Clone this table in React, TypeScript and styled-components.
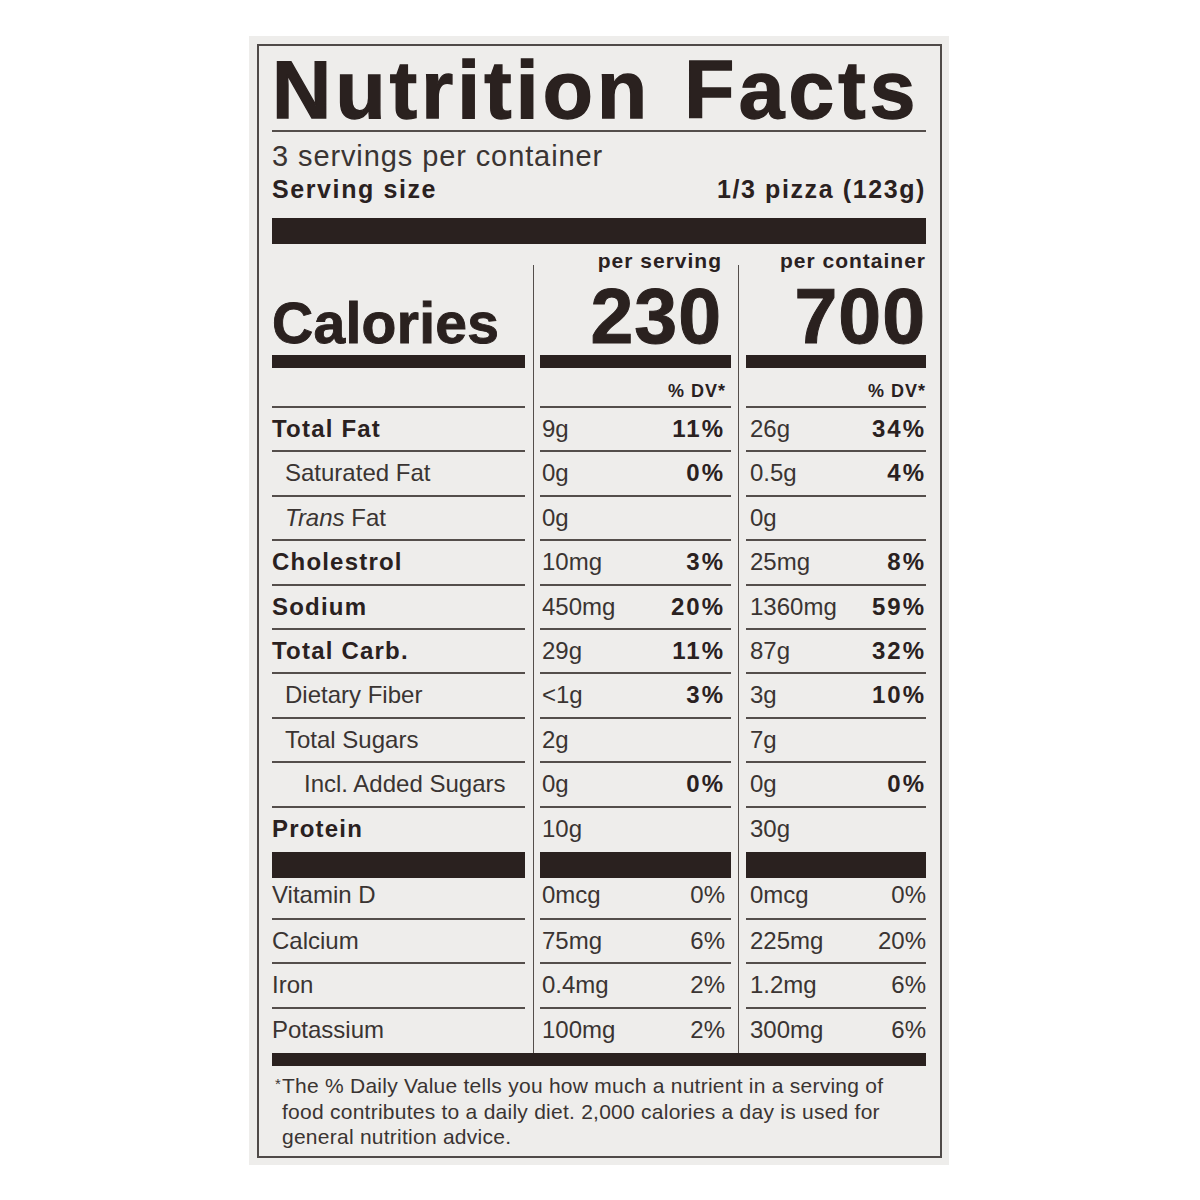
import React from 'react'
import styled, { createGlobalStyle } from 'styled-components'

const INK = '#2a211f'
const TEXT = '#3a3432'
const RULE = '#544e4b'

const GlobalStyle = createGlobalStyle`
  body {
    margin: 0;
    background: #ffffff;
    font-family: 'Liberation Sans', Arial, sans-serif;
  }
`

const Panel = styled.div`
  width: 700px;
  margin: 36px 0 0 249px;
  padding: 8px 7px 7px 8px;
  box-sizing: border-box;
  background: #eeedeb;
`

const Label = styled.div`
  border: 2px solid #4f4a48;
  padding: 3px 14px 6px 13px;
  color: ${INK};
`

const Title = styled.h1`
  margin: 0;
  font-size: 82px;
  line-height: 81px;
  font-weight: 700;
  letter-spacing: 4.2px;
  word-spacing: 6px;
  -webkit-text-stroke: 1.4px ${INK};
  white-space: nowrap;
  border-bottom: 2px solid ${RULE};
`

const Servings = styled.div`
  margin-top: 10px;
  font-size: 29px;
  line-height: 29px;
  color: ${TEXT};
  letter-spacing: 0.9px;
`

const ServingSize = styled.div`
  margin-top: 6px;
  display: flex;
  justify-content: space-between;
  font-size: 25px;
  line-height: 25px;
  font-weight: 700;
  letter-spacing: 1.6px;
`

const Bar = styled.div<{ $h: number; $top?: number }>`
  height: ${({ $h }) => $h}px;
  margin-top: ${({ $top }) => $top ?? 0}px;
  background: ${INK};
`

const Table = styled.div`
  margin-top: 21px;
`

const Row = styled.div`
  display: grid;
  grid-template-columns: 261px 205px 188px;
`

const Cell = styled.div<{ $col: number }>`
  box-sizing: border-box;
  ${({ $col }) =>
    $col === 0
      ? 'padding-right: 8px;'
      : $col === 1
        ? `border-left: 1px solid ${RULE}; padding: 0 7px 0 6px;`
        : `border-left: 1px solid ${RULE}; padding-left: 7px;`}
`

const HeadTop = styled.div<{ $left?: boolean; $inset: number }>`
  height: 90px;
  display: flex;
  flex-direction: column;
  justify-content: flex-end;
  align-items: ${({ $left }) => ($left ? 'flex-start' : 'flex-end')};
  padding-right: ${({ $inset }) => $inset}px;
  padding-bottom: ${({ $left }) => ($left ? 3 : 0)}px;
  box-sizing: border-box;
`

const PerLabel = styled.div`
  font-size: 21px;
  line-height: 21px;
  font-weight: 700;
  letter-spacing: 1px;
  margin-bottom: 7px;
`

const BigNum = styled.div`
  font-size: 77px;
  line-height: 77px;
  font-weight: 700;
  letter-spacing: 1px;
  -webkit-text-stroke: 1px ${INK};
`

const Calories = styled.div`
  font-size: 57px;
  line-height: 57px;
  font-weight: 700;
  letter-spacing: 0.3px;
  -webkit-text-stroke: 0.9px ${INK};
`

const DvRow = styled.div<{ $inset: number }>`
  height: 40px;
  box-sizing: border-box;
  border-bottom: 2px solid ${RULE};
  display: flex;
  justify-content: flex-end;
  align-items: flex-end;
  padding: 0 ${({ $inset }) => $inset}px 6px 0;
  font-size: 18px;
  line-height: 18px;
  font-weight: 700;
  letter-spacing: 1px;
`

const Line = styled.div<{ $h: number; $line: boolean; $pt: number }>`
  height: ${({ $h }) => $h}px;
  box-sizing: border-box;
  border-bottom: ${({ $line }) => ($line ? `2px solid ${RULE}` : 'none')};
  padding-top: ${({ $pt }) => $pt}px;
  display: flex;
  justify-content: space-between;
  align-items: flex-start;
  font-size: 24px;
  line-height: 24px;
`

const Name = styled.span<{ $bold?: boolean; $indent: number }>`
  padding-left: ${({ $indent }) => $indent}px;
  font-weight: ${({ $bold }) => ($bold ? 700 : 400)};
  letter-spacing: ${({ $bold }) => ($bold ? '1.2px' : '0')};
  color: ${({ $bold }) => ($bold ? INK : TEXT)};
  white-space: nowrap;
`

const Amount = styled.span<{ $pad: number }>`
  padding-left: ${({ $pad }) => $pad}px;
  color: ${TEXT};
`

const Pct = styled.span<{ $bold?: boolean; $inset: number }>`
  padding-right: ${({ $inset }) => $inset}px;
  font-weight: ${({ $bold }) => ($bold ? 700 : 400)};
  letter-spacing: ${({ $bold }) => ($bold ? '2px' : '0')};
  color: ${({ $bold }) => ($bold ? INK : TEXT)};
`

const Footnote = styled.p`
  margin: 5px 0 0;
  padding-left: 10px;
  font-size: 21px;
  line-height: 25.5px;
  letter-spacing: 0.25px;
  color: ${TEXT};
  white-space: nowrap;
`

const Star = styled.span`
  display: inline-block;
  width: 7px;
  margin-left: -7px;
  font-size: 15px;
  vertical-align: 4px;
`

type Nutrient = {
  label: React.ReactNode
  bold?: boolean
  indent?: number
  serv: string
  servDv?: string
  cont: string
  contDv?: string
}

const macros: Nutrient[] = [
  { label: 'Total Fat', bold: true, serv: '9g', servDv: '11%', cont: '26g', contDv: '34%' },
  { label: 'Saturated Fat', indent: 13, serv: '0g', servDv: '0%', cont: '0.5g', contDv: '4%' },
  { label: <><i>Trans</i> Fat</>, indent: 13, serv: '0g', cont: '0g' },
  { label: 'Cholestrol', bold: true, serv: '10mg', servDv: '3%', cont: '25mg', contDv: '8%' },
  { label: 'Sodium', bold: true, serv: '450mg', servDv: '20%', cont: '1360mg', contDv: '59%' },
  { label: 'Total Carb.', bold: true, serv: '29g', servDv: '11%', cont: '87g', contDv: '32%' },
  { label: 'Dietary Fiber', indent: 13, serv: '<1g', servDv: '3%', cont: '3g', contDv: '10%' },
  { label: 'Total Sugars', indent: 13, serv: '2g', cont: '7g' },
  { label: 'Incl. Added Sugars', indent: 32, serv: '0g', servDv: '0%', cont: '0g', contDv: '0%' },
  { label: 'Protein', bold: true, serv: '10g', cont: '30g' },
]

const minerals: Nutrient[] = [
  { label: 'Vitamin D', serv: '0mcg', servDv: '0%', cont: '0mcg', contDv: '0%' },
  { label: 'Calcium', serv: '75mg', servDv: '6%', cont: '225mg', contDv: '20%' },
  { label: 'Iron', serv: '0.4mg', servDv: '2%', cont: '1.2mg', contDv: '6%' },
  { label: 'Potassium', serv: '100mg', servDv: '2%', cont: '300mg', contDv: '6%' },
]

// right-hand inset of figures inside each value column
const inset = [0, 6, 0]
const lead = [0, 2, 4]

function NutrientRow({ n, h, line, pt, boldDv }: { n: Nutrient; h: number; line: boolean; pt: number; boldDv: boolean }) {
  return (
    <Row>
      <Cell $col={0}>
        <Line $h={h} $line={line} $pt={pt}>
          <Name $bold={n.bold} $indent={n.indent ?? 0}>{n.label}</Name>
        </Line>
      </Cell>
      {[
        [n.serv, n.servDv],
        [n.cont, n.contDv],
      ].map(([amt, dv], i) => (
        <Cell $col={i + 1} key={i}>
          <Line $h={h} $line={line} $pt={pt}>
            <Amount $pad={lead[i + 1]}>{amt}</Amount>
            {dv && <Pct $bold={boldDv} $inset={inset[i + 1]}>{dv}</Pct>}
          </Line>
        </Cell>
      ))}
    </Row>
  )
}

export default function App() {
  return (
    <>
      <GlobalStyle />
      <Panel>
        <Label>
          <Title>Nutrition Facts</Title>
          <Servings>3 servings per container</Servings>
          <ServingSize>
            <span>Serving size</span>
            <span>1/3 pizza (123g)</span>
          </ServingSize>
          <Bar $h={26} $top={16} />

          <Table>
            <Row>
              <Cell $col={0}>
                <HeadTop $left $inset={0}>
                  <Calories>Calories</Calories>
                </HeadTop>
                <Bar $h={13} />
                <DvRow $inset={0} />
              </Cell>
              <Cell $col={1}>
                <HeadTop $inset={9}>
                  <PerLabel>per serving</PerLabel>
                  <BigNum>230</BigNum>
                </HeadTop>
                <Bar $h={13} />
                <DvRow $inset={5}>% DV*</DvRow>
              </Cell>
              <Cell $col={2}>
                <HeadTop $inset={0}>
                  <PerLabel>per container</PerLabel>
                  <BigNum>700</BigNum>
                </HeadTop>
                <Bar $h={13} />
                <DvRow $inset={0}>% DV*</DvRow>
              </Cell>
            </Row>

            {macros.map((n, i) => (
              <NutrientRow key={i} n={n} h={44.4} line={i < macros.length - 1} pt={9} boldDv />
            ))}

            <Row>
              <Cell $col={0}><Bar $h={26} /></Cell>
              <Cell $col={1}><Bar $h={26} /></Cell>
              <Cell $col={2}><Bar $h={26} /></Cell>
            </Row>

            {minerals.map((n, i) => (
              <NutrientRow
                key={i}
                n={n}
                h={i === 0 ? 42 : 44.4}
                line={i < minerals.length - 1}
                pt={i === 0 ? 5 : 9}
                boldDv={false}
              />
            ))}
          </Table>

          <Bar $h={13} />
          <Footnote>
            <Star>*</Star>The % Daily Value tells you how much a nutrient in a serving of
            <br />
            food contributes to a daily diet. 2,000 calories a day is used for
            <br />
            general nutrition advice.
          </Footnote>
        </Label>
      </Panel>
    </>
  )
}
